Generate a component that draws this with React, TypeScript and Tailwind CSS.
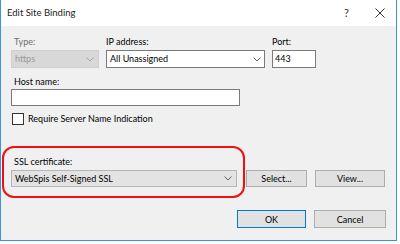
import React from 'react';

const font = { fontFamily: 'Lato, "Noto Sans", sans-serif' };

function Chevron({ color = '#606060' }: { color?: string }) {
  return (
    <svg width="8" height="5" viewBox="0 0 8 5" className="shrink-0">
      <polyline points="0.5,0.5 4,4 7.5,0.5" fill="none" stroke={color} strokeWidth="1" />
    </svg>
  );
}

export default function App() {
  return (
    <div className="w-[400px] h-[244px] bg-white overflow-hidden text-[9px] text-black" style={font}>
      <div className="w-[397px] h-[241px] bg-[#f0f0f0] border-l border-r border-b border-[#3a94e4] flex flex-col relative">
        {/* barra de título */}
        <div className="h-[26px] bg-white flex items-center pl-[6px] pr-[11px] shrink-0">
          <span className="text-[9.5px] text-[#222]">Edit Site Binding</span>
          <span className="ml-auto text-[11px] text-[#333] mr-[26px]">?</span>
          <svg width="10" height="10" viewBox="0 0 10 10">
            <path d="M0.5 0.5 L9.5 9.5 M9.5 0.5 L0.5 9.5" stroke="#333" strokeWidth="1" />
          </svg>
        </div>

        <div className="flex flex-col pl-[10px] pt-[8px]">
          {/* Type / IP / Port */}
          <div className="flex gap-[7px]">
            <div className="flex flex-col w-[88px]">
              <span className="h-[16px] leading-[16px] pl-[3px] text-[#6d6d6d]">Type:</span>
              <div className="h-[18px] bg-[#d8d8d8] border border-[#cfcfcf] flex items-center pl-[3px] pr-[4px] text-[#9a9a9a]">
                <span>https</span>
                <span className="ml-auto"><Chevron color="#a5a5a5" /></span>
              </div>
            </div>
            <div className="flex flex-col w-[159px]">
              <span className="h-[16px] leading-[16px]">IP address:</span>
              <div className="h-[18px] bg-white border border-[#7a7a7a] flex items-center pl-[3px] pr-[3px]">
                <span>All Unassigned</span>
                <span className="ml-auto"><Chevron /></span>
              </div>
            </div>
            <div className="flex flex-col w-[44px]">
              <span className="h-[16px] leading-[16px]">Port:</span>
              <div className="h-[18px] bg-white border border-[#7a7a7a] flex items-center pl-[2px]">443</div>
            </div>
          </div>

          {/* Host name */}
          <span className="h-[15px] leading-[15px] pl-[3px] mt-[6px]">Host name:</span>
          <div className="h-[17px] w-[229px] bg-white border border-[#7a7a7a]" />

          <div className="flex items-center gap-[4px] mt-[6px] h-[13px] pl-[1px]">
            <div className="w-[12px] h-[12px] bg-white border border-[#333]" />
            <span>Require Server Name Indication</span>
          </div>

          {/* SSL certificate */}
          <span className="h-[16px] leading-[16px] pl-[3px] mt-[29px]">SSL certificate:</span>
          <div className="flex items-center gap-[9px]">
            <div className="h-[17px] w-[226px] bg-[#e3e3e3] border border-[#b5b5b5] flex items-center pl-[3px] pr-[4px]">
              <span>WebSpis Self-Signed SSL</span>
              <span className="ml-auto"><Chevron /></span>
            </div>
            <button className="h-[17px] w-[61px] bg-[#e1e1e1] border border-[#adadad] leading-none">Select...</button>
            <button className="h-[17px] w-[70px] ml-[-1px] bg-[#e1e1e1] border border-[#adadad] leading-none">View...</button>
          </div>

          {/* OK / Cancel */}
          <div className="flex gap-[8px] mt-[23px] pl-[226px]">
            <button className="h-[18px] w-[69px] bg-[#e1e1e1] border border-[#0078d7] leading-none">OK</button>
            <button className="h-[18px] w-[72px] bg-[#e1e1e1] border border-[#adadad] leading-none">Cancel</button>
          </div>
        </div>

        {/* marcação vermelha */}
        <div className="absolute left-[1px] top-[146px] w-[243px] h-[52px] rounded-[12px] border-2 border-[#f01010] pointer-events-none" />
      </div>
    </div>
  );
}
